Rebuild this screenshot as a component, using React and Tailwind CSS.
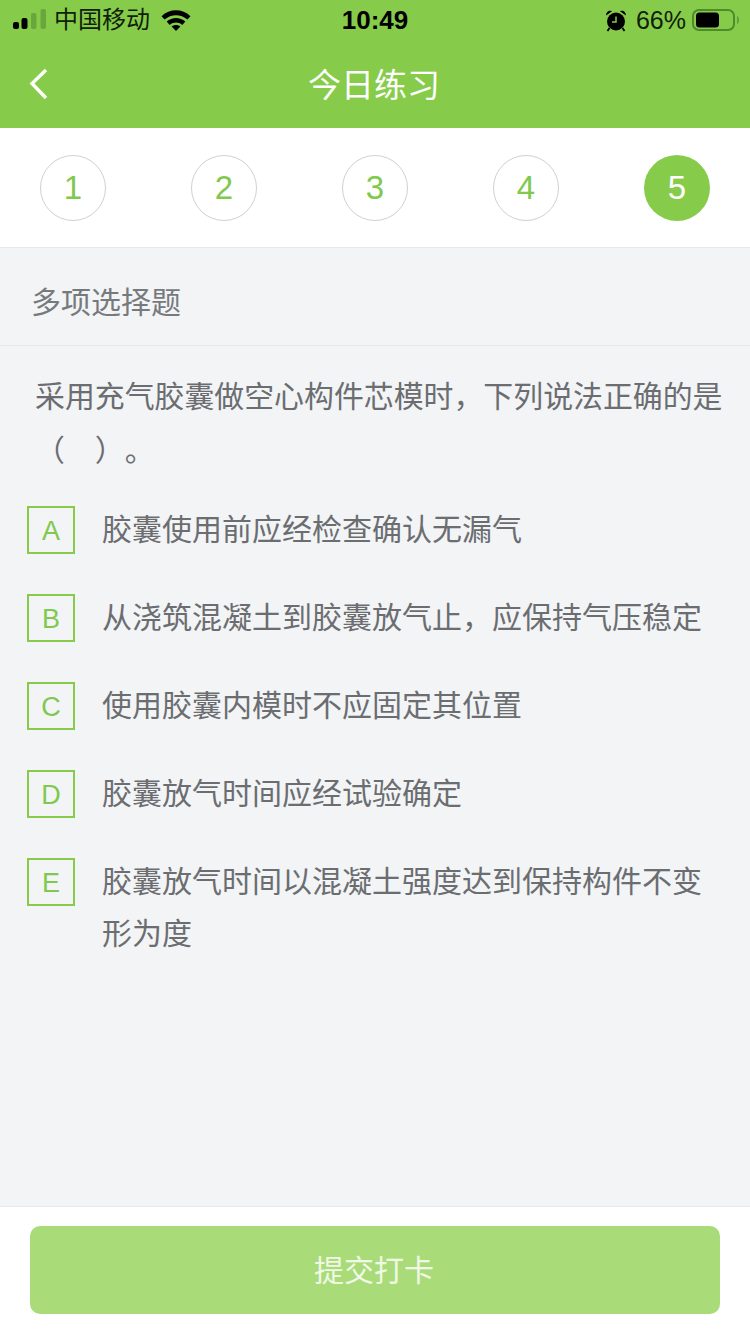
const font = { fontFamily: '"Liberation Sans", "Noto Sans CJK SC", sans-serif' };

function StatusBar() {
  return (
    <div className="relative flex h-10 items-center justify-between pl-[13px] pr-[11px] text-black">
      <div className="flex items-center">
        <svg width="34" height="22" viewBox="0 0 34 22" className="mr-[7px]">
          <rect x="0" y="13" width="6" height="7" rx="2" fill="#000" />
          <rect x="8.5" y="9" width="6" height="11" rx="2" fill="#000" />
          <rect x="18" y="4" width="5.5" height="16" rx="2" fill="#6aa63e" />
          <rect x="27.5" y="0" width="5.5" height="20" rx="2" fill="#6aa63e" />
        </svg>
        <span className="text-[24px] leading-none text-[#10210a]">中国移动</span>
        <svg width="30" height="22" viewBox="0 0 30 22" className="ml-[11px]">
          <path d="M0.5 7.2C8.8 -0.6 21.2 -0.6 29.5 7.2L26.4 10.6C19.8 4.8 10.2 4.8 3.6 10.6Z" fill="#000" />
          <path d="M5.6 12.6C11.2 7.8 18.8 7.8 24.4 12.6L21.2 16C17.4 12.8 12.6 12.8 8.8 16Z" fill="#000" />
          <path d="M10.6 17.4C13.2 15.4 16.8 15.4 19.4 17.4L15 22Z" fill="#000" />
        </svg>
      </div>
      <div className="absolute left-0 right-0 top-0 flex h-10 items-center justify-center text-[26px] font-bold leading-none">10:49</div>
      <div className="relative flex items-center">
        <svg width="22" height="23" viewBox="0 0 22 23" className="mr-[9px]">
          <circle cx="11" cy="12.5" r="9" fill="#000" />
          <path d="M1.2 6.4C0.8 2.8 4.4 0.8 7 2.2Z M20.8 6.4C21.2 2.8 17.6 0.8 15 2.2Z" fill="#000" />
          <path d="M4.5 19L2.5 22M17.5 19L19.5 22" stroke="#000" strokeWidth="1.8" />
          <path d="M11 7.5V13H7" stroke="#86cc4a" strokeWidth="1.5" fill="none" />
        </svg>
        <span className="text-[25px] leading-none text-[#10210a]">66%</span>
        <svg width="50" height="24" viewBox="0 0 50 24" className="ml-[3px]">
          <rect x="4" y="2" width="41" height="20" rx="6" fill="none" stroke="#4f8a2c" strokeWidth="2" />
          <rect x="7" y="4.5" width="23" height="15" rx="3.5" fill="#000" />
          <path d="M48 8C49.4 8.6 50 10.2 50 12C50 13.8 49.4 15.4 48 16Z" fill="#5f9c38" />
        </svg>
      </div>
    </div>
  );
}

function Header() {
  return (
    <div className="relative flex h-[88px] items-center justify-center pr-[2px] pt-[2px]">
      <svg width="22" height="34" viewBox="0 0 22 34" className="absolute left-[28px] top-[27px]">
        <path d="M18 3L4 16.5L18 31" fill="none" stroke="#fff" strokeWidth="3.4" />
      </svg>
      <span className="text-[33px] leading-none text-white">今日练习</span>
    </div>
  );
}

function Step({ n, active }) {
  return (
    <div
      className={
        active
          ? "flex h-[66px] w-[66px] items-center justify-center rounded-full bg-[#86cc4a] text-[33px] leading-none text-white"
          : "flex h-[66px] w-[66px] items-center justify-center rounded-full border border-[#d0d0d0] text-[33px] leading-none text-[#80c94d]"
      }
    >
      {n}
    </div>
  );
}

function Option({ letter, children }) {
  return (
    <div className="mb-[36px] flex items-start pl-[27px] pr-[40px]">
      <div className="mt-[2px] flex h-[48px] w-[48px] shrink-0 items-center justify-center border-2 border-[#86cc4a] pt-[3px] text-[27px] leading-none text-[#80c94d]">
        {letter}
      </div>
      <div className="ml-[27px] text-[30px] leading-[52px] text-[#6b6d70]">{children}</div>
    </div>
  );
}

export default function App() {
  return (
    <div className="flex h-[1334px] w-[750px] flex-col overflow-hidden bg-[#f2f4f6]" style={font}>
      <div className="bg-[#86cc4a]">
        <StatusBar />
        <Header />
      </div>
      <div className="flex h-[120px] items-center justify-between border-b border-[#e8e8e8] bg-white pl-[40px] pr-[40px]">
        {[1, 2, 3, 4].map((n) => (
          <Step key={n} n={n} />
        ))}
        <Step n={5} active />
      </div>
      <div className="flex h-[98px] items-center border-b border-[#e6e8ea] pl-[31px] pt-[12px] text-[30px] leading-none text-[#777a7d]">
        多项选择题
      </div>
      <div className="pl-[35px] pr-[20px] pt-[24px] text-[29.9px] leading-[54px] text-[#6b6d70] [text-spacing-trim:space-all]">
        采用充气胶囊做空心构件芯模时，下列说法正确的是（　）。
      </div>
      <div className="mt-[26px] flex-1">
        <Option letter="A">胶囊使用前应经检查确认无漏气</Option>
        <Option letter="B">从浇筑混凝土到胶囊放气止，应保持气压稳定</Option>
        <Option letter="C">使用胶囊内模时不应固定其位置</Option>
        <Option letter="D">胶囊放气时间应经试验确定</Option>
        <Option letter="E">胶囊放气时间以混凝土强度达到保持构件不变形为度</Option>
      </div>
      <div className="flex h-[128px] border-t border-[#e8e8e8] bg-white px-[30px] pt-[19px]">
        <div className="flex h-[88px] w-full items-center justify-center rounded-[10px] bg-[#a9dc78] pr-[2px] pt-[2px] text-[30px] leading-none text-[#f0f8e8]">
          提交打卡
        </div>
      </div>
    </div>
  );
}
